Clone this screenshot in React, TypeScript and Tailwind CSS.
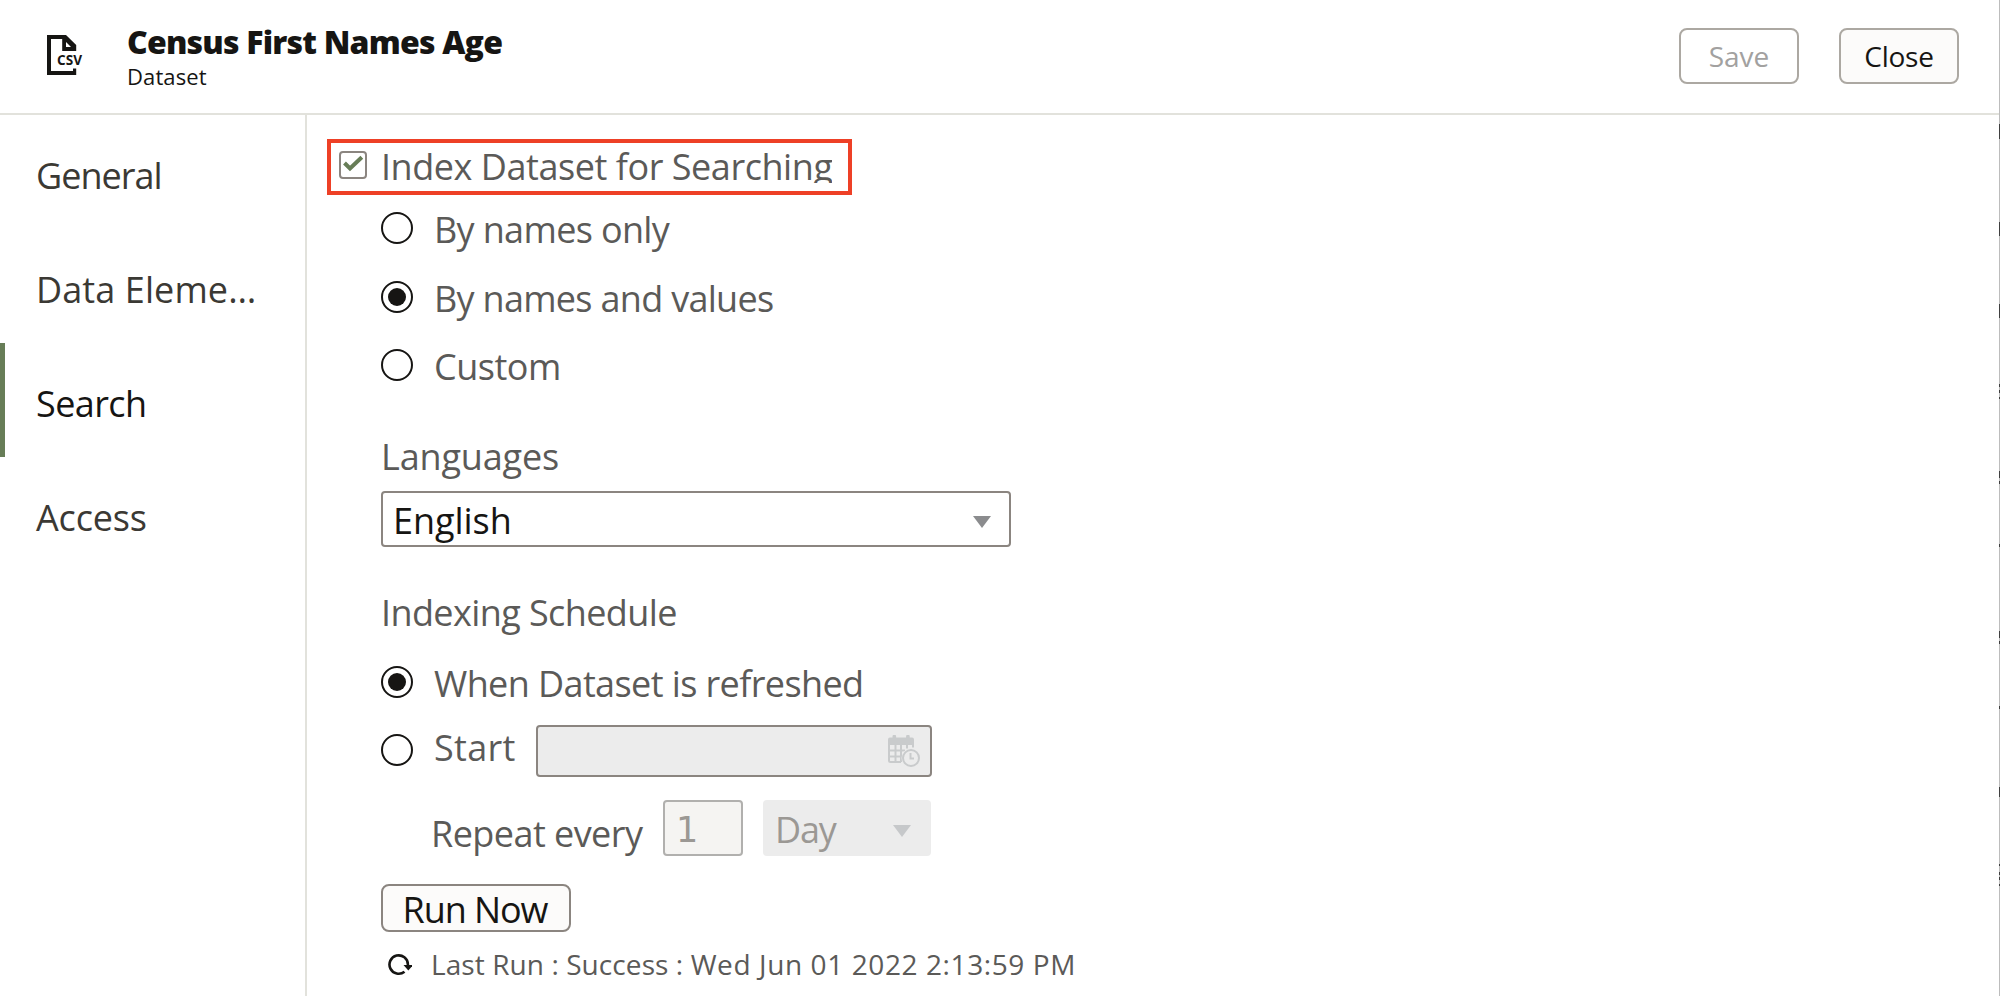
import React from "react";

function Radio({ checked = false }: { checked?: boolean }) {
  return (
    <span className="flex size-8 shrink-0 items-center justify-center rounded-full border-2 border-[#161513] bg-white">
      {checked && <span className="size-[18px] rounded-full bg-[#161513]" />}
    </span>
  );
}

function Caret({ className }: { className: string }) {
  return (
    <svg viewBox="0 0 18 12" className={className} fill="currentColor">
      <path d="M0 0h18L9 12z" />
    </svg>
  );
}

function CsvIcon() {
  return (
    <svg viewBox="0 0 40 44" className="h-11 w-10 shrink-0">
      <path
        d="M3 3h19l10.200 10v6h-14V7H7v32h22v-2.500h3.200v6.500H3z"
        fill="#161513"
      />
      <path d="M22 10v5h5z" fill="#fff" />
      <text x="13" y="33" className="font-['Open_Sans'] text-[14.5px] font-bold" textLength="25" lengthAdjust="spacingAndGlyphs" fill="#161513">
        CSV
      </text>
    </svg>
  );
}

function CalendarClockIcon() {
  return (
    <svg viewBox="0 0 32 32" className="size-8 text-[#c9cbcc]" fill="none" stroke="currentColor">
      <path d="M0 10V4.500A2 2 0 0 1 2 2.500h2.500V1.500a1.800 1.800 0 0 1 3.600 0v1h10V1.500a1.800 1.800 0 0 1 3.600 0v1H24a2 2 0 0 1 2 2V10z" fill="currentColor" stroke="none" />
      <path d="M1 10v15.500q0 1.500 1.500 1.500H13M7.500 10v17M13 10v17M19 10v3.500M25 10v2.500M0 15.500h17M0 21.500h13.500" strokeWidth="2" />
      <circle cx="23" cy="23" r="9.500" fill="#ececec" stroke="none" />
      <circle cx="23" cy="23" r="8" strokeWidth="2" />
      <path d="M22.500 18v5.500H26" strokeWidth="2" />
    </svg>
  );
}

const navItems = [
  { label: "General", tracking: "tracking-[-0.98px]" },
  { label: "Data Eleme…", tracking: "tracking-[0.1px]" },
  { label: "Search", tracking: "tracking-[-0.6px]", active: true },
  { label: "Access", tracking: "tracking-[-0.15px]" },
];

// Slivers of the panel that sits behind the drawer's right edge.
const edgeMarks = [
  "mt-[124px] h-[15px]",
  "mt-[83px] h-3.5",
  "mt-[68px] h-3.5",
  "mt-[66px] h-[3px]",
  "mt-[3px] h-[3px]",
  "mt-1 h-0.5",
  "mt-[72px] h-[7px]",
  "mt-[3px] h-[3px]",
  "mt-[60px] h-[3px]",
  "mt-[84px] h-[7px]",
  "mt-[3px] h-[3px]",
  "mt-[62px] h-[3px]",
  "mt-[78px] h-2.5",
  "mt-[67px] h-0.5",
  "mt-1.5 h-[3px]",
  "mt-0.5 h-[3px]",
  "mt-1 h-0.5",
];

export default function App() {
  return (
    <div className="flex h-[996px] w-[2000px] overflow-hidden bg-white font-['Open_Sans',sans-serif] text-[36px] leading-[35px] text-[#5b5a58]">
      <div className="flex min-w-0 flex-1 flex-col">
        <header className="flex h-[115px] shrink-0 items-start border-b-2 border-[#e2e2dc] pr-10 pl-11 text-[#161513]">
          <div className="mt-8">
            <CsvIcon />
          </div>
          <div className="ml-[43px] flex flex-1 flex-col pt-[22px]">
            <h1 className="text-[32px] leading-[39px] font-extrabold tracking-[-0.8px] whitespace-nowrap">Census First Names Age</h1>
            <p className="mt-px text-[22px] leading-[28px] tracking-[0.1px]">Dataset</p>
          </div>
          <div className="mt-7 flex gap-10 text-[28px]">
            <button className="h-14 w-30 rounded-lg border-2 border-[#aca8a2] text-[#a2a1a0]">Save</button>
            <button className="h-14 w-30 rounded-lg border-2 border-[#aca8a2] bg-[#fcfbfa] tracking-[-0.22px]">Close</button>
          </div>
        </header>

        <div className="flex min-h-0 flex-1">
          <nav className="flex w-[307px] shrink-0 flex-col border-r-2 border-[#e2e2dc]">
            {navItems.map((item) => (
              <a
                key={item.label}
                className={
                  "flex h-[114px] items-center border-l-[5px] pt-[7px] pl-[31px] whitespace-nowrap " +
                  item.tracking +
                  (item.active ? " border-[#677d57] text-[#161513]" : " border-transparent text-[#3b3934]")
                }
              >
                {item.label}
              </a>
            ))}
          </nav>

          <main className="flex min-w-0 flex-1 flex-col pt-6 pl-5 whitespace-nowrap">
            <div className="flex h-14 w-[525px] shrink-0 items-start border-4 border-[#ee4026] pl-2">
              <span className="mt-2 flex size-7 shrink-0 items-center justify-center rounded border-2 border-[#8b8580] bg-white">
                <svg viewBox="0 0 24 24" className="size-6 shrink-0" fill="none" stroke="#677d57" strokeWidth="4">
                  <path d="M3.500 10l5.500 5.500L20.800 4.200" />
                </svg>
              </span>
              <label className="ml-3.5 h-10 overflow-hidden leading-[47px] tracking-[-0.45px]">Index Dataset for Searching</label>
            </div>

            <section className="flex flex-col pl-[54px]">
              <div className="mt-[17px] flex h-8 gap-[21px]">
                <Radio />
                <span className="tracking-[-0.65px]">By names only</span>
              </div>
              <div className="mt-[37px] flex h-8 gap-[21px]">
                <Radio checked />
                <span className="tracking-[-0.7px]">By names and values</span>
              </div>
              <div className="mt-9 flex h-8 gap-[21px]">
                <Radio />
                <span className="tracking-[-0.48px]">Custom</span>
              </div>

              <h2 className="mt-[58px] h-8 tracking-[-0.16px]">Languages</h2>
              <div className="mt-5 flex h-14 w-[630px] items-center justify-between rounded border-2 border-[#8b8580] pr-[18px] pl-2.5 text-[#161513]">
                <span className="pt-[3px] tracking-[-0.05px]">English</span>
                <Caret className="mt-1.5 h-3 w-[18px] text-[#8b8c8e]" />
              </div>

              <h2 className="mt-12 h-8 tracking-[-0.6px]">Indexing Schedule</h2>
              <div className="mt-[39px] flex h-8 gap-[21px]">
                <Radio checked />
                <span className="tracking-[-0.6px]">When Dataset is refreshed</span>
              </div>
              <div className="mt-[27px] flex h-[52px]">
                <div className="mt-[9px]">
                  <Radio />
                </div>
                <span className="mt-[5px] ml-[21px] w-[102px] tracking-[0.3px]">Start</span>
                <div className="flex w-[396px] items-center justify-end rounded border-2 border-[#8b8580] bg-[#ececec] pr-2.5">
                  <CalendarClockIcon />
                </div>
              </div>
              <div className="mt-[23px] flex h-14 items-center pl-[50px]">
                <span className="w-[232px] pt-[11px] tracking-[-0.55px]">Repeat every</span>
                <div className="flex h-14 w-20 items-center rounded border-2 border-[#b1b0ae] bg-[#f5f4f2] pt-[5px] pl-[11px] font-['DejaVu_Sans'] text-[35px] text-[#9b9894]">1</div>
                <div className="ml-5 flex h-14 w-42 items-center justify-between rounded bg-[#ececec] pr-5 pl-3 text-[#9b9894]">
                  <span className="pt-[3px] tracking-[-1.2px]">Day</span>
                  <Caret className="mt-1.5 h-3 w-[18px] text-[#c6c8ca]" />
                </div>
              </div>

              <button className="mt-7 h-12 w-[190px] rounded-lg border-2 border-[#8b8580] bg-[#fcfbfa] pt-[3px] pr-0.5 tracking-[-1.08px] text-[#161513]">Run Now</button>
              <div className="mt-5 flex h-6 items-center pl-2">
                <svg viewBox="0 0 24 24" className="-ml-px size-6 text-[#161513]" fill="none" stroke="currentColor" strokeWidth="2.6">
                  <path d="M16.500 19.700A9.200 9.200 0 1 1 19.900 12.500V15" />
                  <path d="M15.500 13h9.500l-4.700 5.500z" fill="currentColor" stroke="none" />
                </svg>
                <span className="ml-[19px] text-[28px] tracking-[0.08px]">
                  Last Run : Success : <time className="tracking-[0.6px]">Wed Jun 01 2022 2:13:59 PM</time>
                </span>
              </div>
            </section>
          </main>
        </div>
      </div>
      <div className="flex w-px shrink-0 flex-col bg-[#bcbcbc]">
        {edgeMarks.map((mark, i) => (
          <span key={i} className={"shrink-0 bg-[#3f3f3f] " + mark} />
        ))}
      </div>
    </div>
  );
}
